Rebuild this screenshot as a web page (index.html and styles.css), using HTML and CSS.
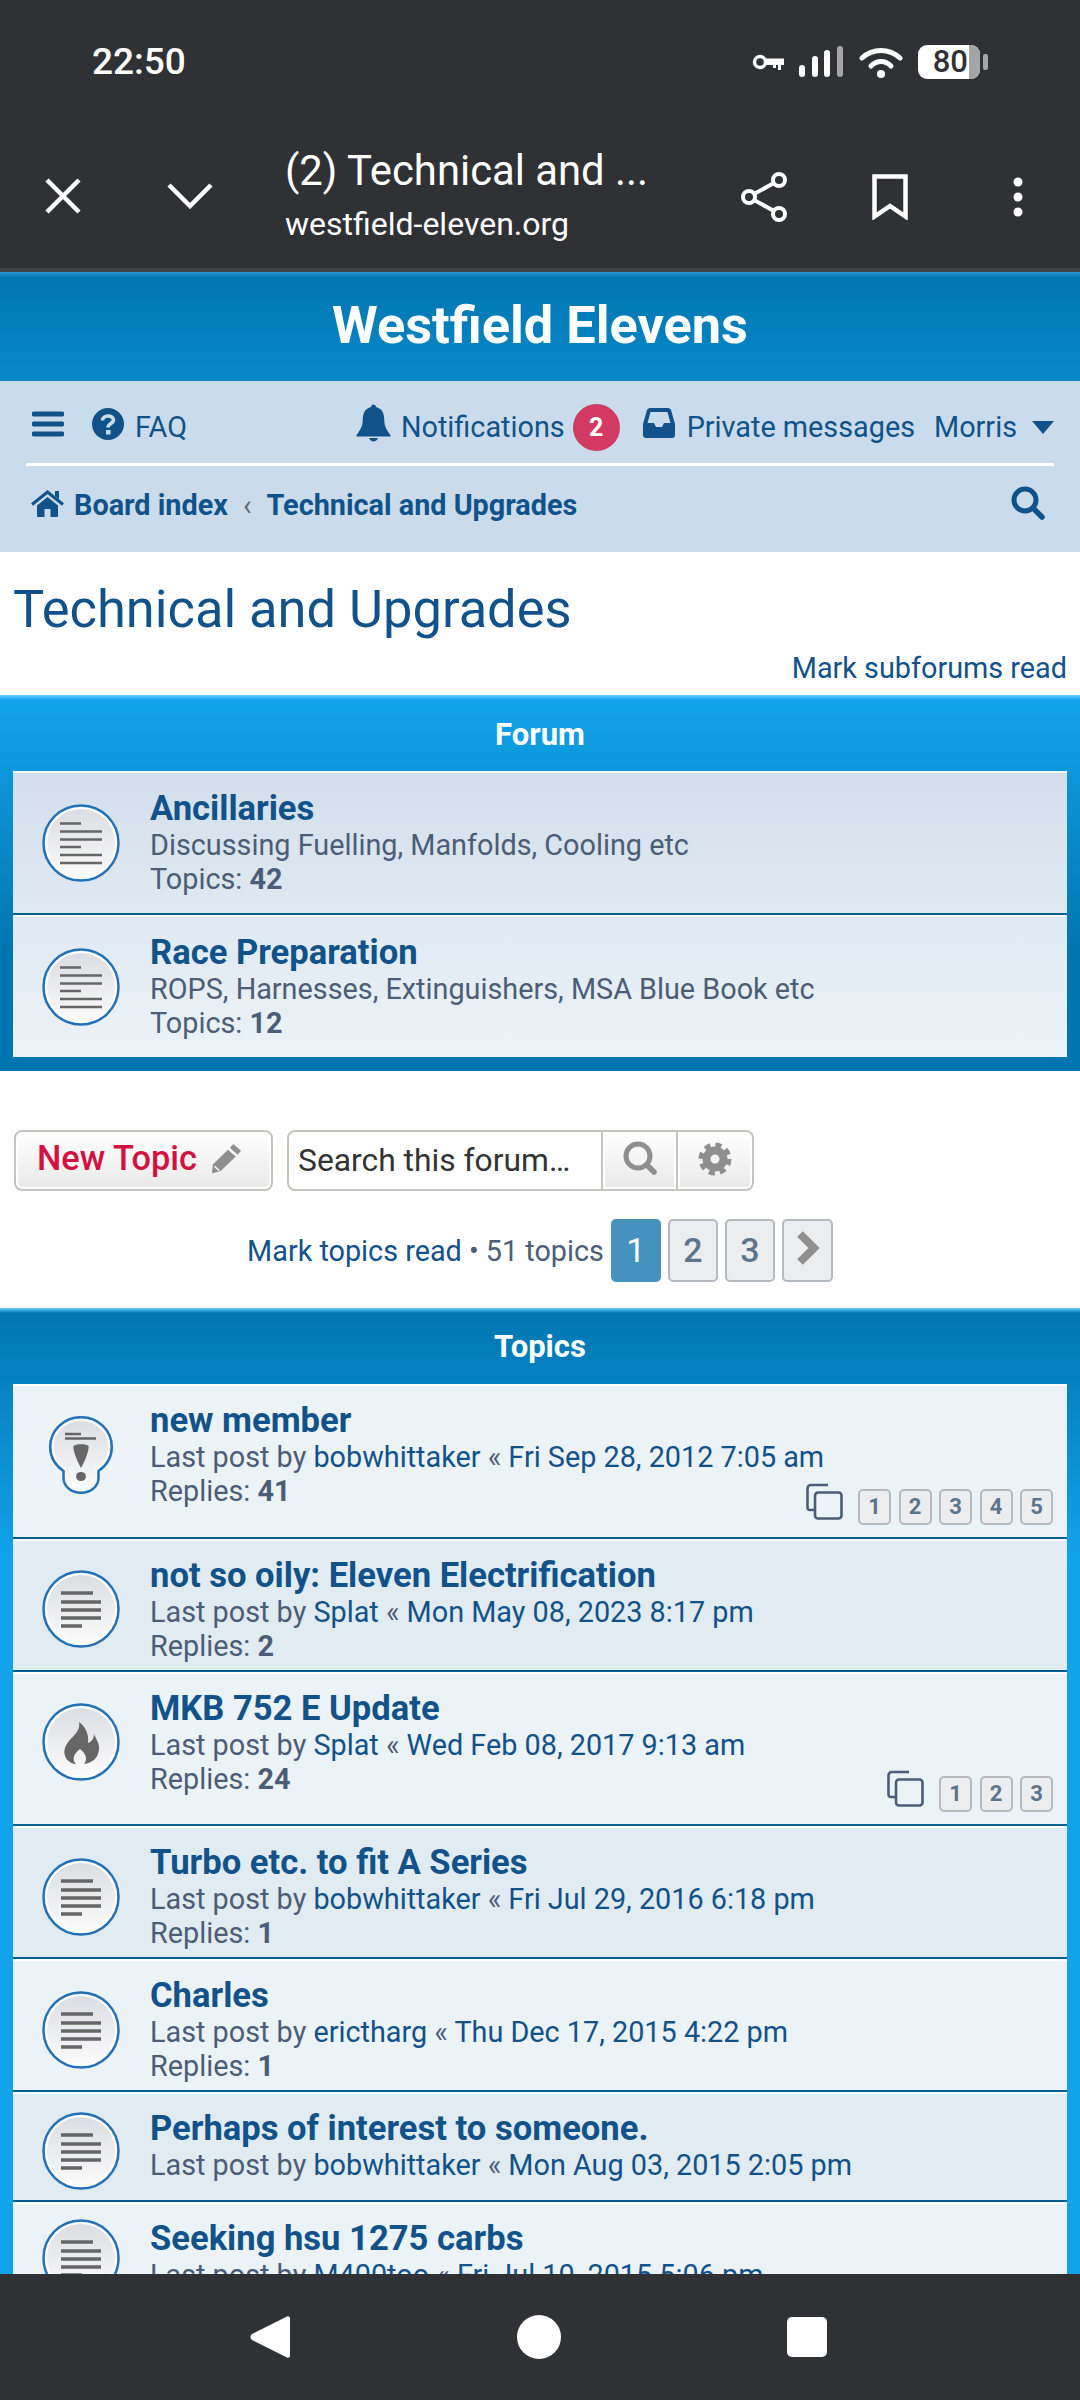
FILE: index.html
```html
<!DOCTYPE html>
<html>
<head>
<meta name="viewport" content="width=device-width, initial-scale=1">
<link rel="stylesheet" href="styles.css">
</head>
<body>
  <svg class="defs" aria-hidden="true">
    <defs>
      <linearGradient id="disc" x1="0" y1="0" x2="0" y2="1">
        <stop offset="0" stop-color="#dcdde2"/>
        <stop offset="1" stop-color="#fbfbfb"/>
      </linearGradient>
      <symbol id="icon-forum" viewBox="0 0 78 78">
        <circle cx="39" cy="39" r="37.5" fill="#fff" stroke="#2272b8" stroke-width="2.5"/>
        <circle cx="39" cy="39" r="34" fill="url(#disc)"/>
        <path d="M18 19.5h21M18 27.5h42M18 35.5h42M18 43h21M18 51h42M18 59h42" stroke="#666" stroke-width="2.4"/>
      </symbol>
      <symbol id="icon-topic" viewBox="0 0 78 78">
        <circle cx="39" cy="39" r="37.5" fill="#fff" stroke="#2272b8" stroke-width="2.5"/>
        <circle cx="39" cy="39" r="34" fill="url(#disc)"/>
        <path d="M19 23h32M19 32h40M19 40h40M19 48h40M19 56h21" stroke="#666" stroke-width="3.6"/>
      </symbol>
      <symbol id="icon-hot" viewBox="0 0 78 78">
        <circle cx="39" cy="39" r="37.5" fill="#fff" stroke="#2272b8" stroke-width="2.5"/>
        <circle cx="39" cy="39" r="34" fill="url(#disc)"/>
        <path fill="#666" d="M37 19C39 27 32 32 27 38C22 44 21 50 24 55C27 60 32 61 34 61C30 57 31 51 38 46C44 50 46 57 42 61C50 60 56 55 57 47C58 41 54 36 52 31C52 36 49 39 46 40C47 32 44 24 37 19Z"/>
      </symbol>
      <symbol id="icon-sticky" viewBox="0 0 78 78">
        <path d="M39 1.2C21.800 1.200 8.200 14.500 8.200 31C8.200 42.500 15 50.500 21.500 55V62C21.500 71 30 76.800 39 76.800C48 76.800 56.500 71 56.500 62V55C63 50.500 69.800 42.500 69.800 31C69.800 14.500 56.200 1.200 39 1.200Z" fill="#f8f8f9" stroke="#2272b8" stroke-width="2.500"/>
        <path d="M39 5C24 5 12 16.500 12 31C12 41 18 48 25 52.500V62C25 69 32 73 39 73C46 73 53 69 53 62V52.500C60 48 66 41 66 31C66 16.500 54 5 39 5Z" fill="url(#disc)"/>
        <path d="M23 18h16M23 22.500h31" stroke="#666" stroke-width="2.600" fill="none"/>
        <path fill="#666" d="M31.500 30C33 27.500 45 27.500 46.500 30C47.500 34 42 47 39 52C36 47 30.500 34 31.500 30Z"/>
        <ellipse cx="39" cy="60.500" rx="5" ry="4.500" fill="#666"/>
      </symbol>
      <symbol id="icon-pages" viewBox="0 0 37 37">
        <path d="M22 2H5C3 2 1.500 3.500 1.500 5.500V24.500C1.500 26 2.500 27 4 27H9" fill="none" stroke="#4c5d77" stroke-width="2.600"/>
        <rect x="9" y="9.500" width="26.500" height="26" rx="3" fill="none" stroke="#4c5d77" stroke-width="2.600"/>
      </symbol>
    </defs>
  </svg>

  <div class="phone-top">
    <div class="status-bar">
      <span class="clock">22:50</span>
      <div class="status-icons">
        <svg class="ic-key" viewBox="0 0 32 18"><circle cx="8" cy="9" r="5.500" fill="none" stroke="#fff" stroke-width="3.400"/><path d="M13 5.500h19v6.500h-3v5h-3v-5h-2v3h-3v-3h-8z" fill="#fff"/></svg>
        <svg class="ic-signal" viewBox="0 0 46 32"><g fill="none" stroke-width="6" stroke-linecap="round"><path d="M4 22v6M17 13v15M29 7v21" stroke="#fff"/><path d="M42 3v25" stroke="#a5a5a7"/></g></svg>
        <svg class="ic-wifi" viewBox="0 0 44 31"><g fill="none" stroke="#fff" stroke-width="5" stroke-linecap="round"><path d="M3 11C14 1 30 1 41 11"/><path d="M12 19C18 13 26 13 32 19"/></g><circle cx="22" cy="27" r="4" fill="#fff"/></svg>
        <div class="battery"><span class="battery-level">80</span><span class="battery-rest"></span></div>
        <span class="battery-cap"></span>
      </div>
    </div>
    <div class="toolbar">
      <svg class="ic-close" viewBox="0 0 36 36"><path d="M2 2l32 32M34 2L2 34" stroke="#fff" stroke-width="4.500"/></svg>
      <svg class="ic-down" viewBox="0 0 46 26"><path d="M2 2l21 21L44 2" fill="none" stroke="#fff" stroke-width="4.500"/></svg>
      <div class="tab-info">
        <div class="tab-title">(2) Technical and ...</div>
        <div class="tab-url">westfield-eleven.org</div>
      </div>
      <svg class="ic-share" viewBox="0 0 46 52"><g fill="none" stroke="#fff" stroke-width="4"><circle cx="38" cy="9" r="6"/><circle cx="8" cy="26" r="6"/><circle cx="38" cy="43" r="6"/><path d="M13 23L33 12M13 29l20 11"/></g></svg>
      <svg class="ic-bookmark" viewBox="0 0 36 46"><path d="M2.500 2.500h31v40L18 32 2.500 42.500z" fill="none" stroke="#fff" stroke-width="4.500"/></svg>
      <svg class="ic-dots" viewBox="0 0 12 40"><circle cx="6" cy="5" r="4.500" fill="#fff"/><circle cx="6" cy="20" r="4.500" fill="#fff"/><circle cx="6" cy="35" r="4.500" fill="#fff"/></svg>
    </div>
  </div>

  <div class="page">
    <div class="site-head">Westfield Elevens</div>

    <div class="navbar">
      <div class="nav-row nav-main">
        <svg class="ic-bars" viewBox="0 0 32 26"><path d="M2 3h28M2 13h28M2 23h28" stroke="#105289" stroke-width="5" stroke-linecap="round"/></svg>
        <svg class="ic-faq" viewBox="0 0 32 32"><circle cx="16" cy="16" r="16" fill="#105289"/><path d="M10.500 12.500C10.500 6.500 21.500 6.500 21.500 12C21.500 15.500 16 15.500 16 19.500" fill="none" stroke="#cadceb" stroke-width="3.600"/><rect x="14" y="22" width="4.500" height="4.500" fill="#cadceb"/></svg>
        <a class="nav-link" href="#">FAQ</a>
        <div class="nav-right">
          <svg class="ic-bell" viewBox="0 0 36 38"><path fill="#105289" d="M18 0c1.500 0 2.500 1 2.500 2.600C26.500 4 29 9 29 15c0 8 3 12 6.500 16.500V33H.5v-1.500C4 27 7 23 7 15 7 9 9.500 4 15.500 2.600 15.500 1 16.500 0 18 0zM13.500 34.500h9C22 37 20 38 18 38s-4-1-4.500-3.500z"/></svg>
          <a class="nav-link" href="#">Notifications</a>
          <span class="badge">2</span>
          <svg class="ic-inbox" viewBox="0 0 32 30"><path fill="#105289" d="M7 0h18c1.500 0 2.500 1 3 2l4 14v11c0 2-1 3-3 3H3c-2 0-3-1-3-3V16L4 2c.5-1 1.500-2 3-2zM7.500 4L4.500 15H11l2 4h6l2-4h6.500L24.500 4z"/></svg>
          <a class="nav-link" href="#">Private messages</a>
          <a class="nav-link user-link" href="#">Morris</a>
          <span class="caret"></span>
        </div>
      </div>
      <div class="nav-row nav-crumbs">
        <svg class="ic-home" viewBox="0 0 33 27"><path fill="#105289" d="M6 15.500L16.500 7 27 15.500V26c0 .6-.4 1-1 1h-6.500v-8h-6v8H7c-.6 0-1-.4-1-1z"/><path fill="none" stroke="#105289" stroke-width="3" d="M1 14.500L16.500 2 32 14.500"/><path fill="#105289" d="M24 1h4v8l-4-3z"/></svg>
        <a class="crumb" href="#">Board index</a>
        <span class="crumb-sep">&lsaquo;</span>
        <a class="crumb" href="#">Technical and Upgrades</a>
        <svg class="ic-search" viewBox="0 0 34 34"><circle cx="14" cy="14" r="11" fill="none" stroke="#105289" stroke-width="5"/><path d="M22 22l9 9" stroke="#105289" stroke-width="5.500" stroke-linecap="round"/></svg>
      </div>
    </div>

    <div class="intro">
      <h2 class="forum-heading">Technical and Upgrades</h2>
      <div class="mark-read"><a href="#">Mark subforums read</a></div>
    </div>

    <div class="block block-forums">
      <div class="block-head">Forum</div>
      <div class="row forum-row">
        <svg class="row-icon"><use href="#icon-forum"/></svg>
        <div class="row-text">
          <a class="row-title" href="#">Ancillaries</a>
          <div class="row-line">Discussing Fuelling, Manfolds, Cooling etc</div>
          <div class="row-line">Topics: <strong>42</strong></div>
        </div>
      </div>
      <div class="row forum-row">
        <svg class="row-icon"><use href="#icon-forum"/></svg>
        <div class="row-text">
          <a class="row-title" href="#">Race Preparation</a>
          <div class="row-line">ROPS, Harnesses, Extinguishers, MSA Blue Book etc</div>
          <div class="row-line">Topics: <strong>12</strong></div>
        </div>
      </div>
    </div>

    <div class="actions">
      <a class="btn-new" href="#">New Topic
        <svg class="ic-pencil" viewBox="0 0 32 32"><path fill="#8f8f8f" d="M23 1l8 7-3.500 4-8-7zM17.500 7l8 7L10 29 1 31.500 2 22z"/><path d="M3.500 24l5 4.500" stroke="#f4f4f4" stroke-width="1.500"/></svg>
      </a>
      <div class="search-box">
        <div class="search-input">Search this forum…</div>
        <div class="search-btn">
          <svg class="ic-tool" viewBox="0 0 34 36"><circle cx="15" cy="15" r="12" fill="none" stroke="#8f8f8f" stroke-width="5"/><path d="M24 24l7 7" stroke="#8f8f8f" stroke-width="5.500" stroke-linecap="round"/></svg>
        </div>
        <div class="search-btn search-btn-last">
          <svg class="ic-tool" viewBox="0 0 34 34"><circle cx="17" cy="17" r="8.500" fill="none" stroke="#8f8f8f" stroke-width="8"/><circle cx="17" cy="17" r="14" fill="none" stroke="#8f8f8f" stroke-width="5" stroke-dasharray="6 5"/></svg>
        </div>
      </div>
    </div>

    <div class="pager-row">
      <a href="#">Mark topics read</a><span class="pager-count">• 51 topics</span>
      <span class="page-num page-active">1</span>
      <span class="page-num">2</span>
      <span class="page-num">3</span>
      <span class="page-num page-next"><svg viewBox="0 0 24 36"><path d="M4 4l14 14L4 32" fill="none" stroke="#8f8f8f" stroke-width="8"/></svg></span>
    </div>

    <div class="block block-topics">
      <div class="block-head">Topics</div>

      <div class="row topic-row row-light has-pages">
        <svg class="row-icon"><use href="#icon-sticky"/></svg>
        <div class="row-text">
          <a class="row-title" href="#">new member</a>
          <div class="row-line">Last post by <a href="#">bobwhittaker</a> « <a href="#">Fri Sep 28, 2012 7:05 am</a></div>
          <div class="row-line">Replies: <strong>41</strong></div>
        </div>
        <div class="mini-pages">
          <svg class="ic-pages"><use href="#icon-pages"/></svg>
          <span class="mini">1</span><span class="mini">2</span><span class="mini">3</span><span class="mini">4</span><span class="mini">5</span>
        </div>
      </div>

      <div class="row topic-row row-dark">
        <svg class="row-icon"><use href="#icon-topic"/></svg>
        <div class="row-text">
          <a class="row-title" href="#">not so oily: Eleven Electrification</a>
          <div class="row-line">Last post by <a href="#">Splat</a> « <a href="#">Mon May 08, 2023 8:17 pm</a></div>
          <div class="row-line">Replies: <strong>2</strong></div>
        </div>
      </div>

      <div class="row topic-row row-light has-pages">
        <svg class="row-icon"><use href="#icon-hot"/></svg>
        <div class="row-text">
          <a class="row-title" href="#">MKB 752 E Update</a>
          <div class="row-line">Last post by <a href="#">Splat</a> « <a href="#">Wed Feb 08, 2017 9:13 am</a></div>
          <div class="row-line">Replies: <strong>24</strong></div>
        </div>
        <div class="mini-pages">
          <svg class="ic-pages"><use href="#icon-pages"/></svg>
          <span class="mini">1</span><span class="mini">2</span><span class="mini">3</span>
        </div>
      </div>

      <div class="row topic-row row-dark">
        <svg class="row-icon"><use href="#icon-topic"/></svg>
        <div class="row-text">
          <a class="row-title" href="#">Turbo etc. to fit A Series</a>
          <div class="row-line">Last post by <a href="#">bobwhittaker</a> « <a href="#">Fri Jul 29, 2016 6:18 pm</a></div>
          <div class="row-line">Replies: <strong>1</strong></div>
        </div>
      </div>

      <div class="row topic-row row-light">
        <svg class="row-icon"><use href="#icon-topic"/></svg>
        <div class="row-text">
          <a class="row-title" href="#">Charles</a>
          <div class="row-line">Last post by <a href="#">erictharg</a> « <a href="#">Thu Dec 17, 2015 4:22 pm</a></div>
          <div class="row-line">Replies: <strong>1</strong></div>
        </div>
      </div>

      <div class="row topic-row row-dark row-short">
        <svg class="row-icon"><use href="#icon-topic"/></svg>
        <div class="row-text">
          <a class="row-title" href="#">Perhaps of interest to someone.</a>
          <div class="row-line">Last post by <a href="#">bobwhittaker</a> « <a href="#">Mon Aug 03, 2015 2:05 pm</a></div>
        </div>
      </div>

      <div class="row topic-row row-light">
        <svg class="row-icon"><use href="#icon-topic"/></svg>
        <div class="row-text">
          <a class="row-title" href="#">Seeking hsu 1275 carbs</a>
          <div class="row-line">Last post by <a href="#">M400too</a> « <a href="#">Fri Jul 10, 2015 5:06 pm</a></div>
        </div>
      </div>
    </div>
  </div>

  <div class="phone-nav">
    <svg class="ic-back" viewBox="0 0 40 44"><path d="M37 1.500c1.500-.8 3 .2 3 2v37c0 1.800-1.500 2.800-3 2L2 25c-2-1.500-2-4.500 0-6z" fill="#fff"/></svg>
    <span class="nav-home"></span>
    <span class="nav-recent"></span>
  </div>
</body>
</html>
```

FILE: styles.css
```css
* {
  box-sizing: border-box;
}

html, body {
  margin: 0;
  height: 2400px;
}

body {
  display: flex;
  flex-direction: column;
  overflow: hidden;
  background: #fff;
  font-family: Roboto, "Noto Sans", sans-serif;
  font-size: 28.8px;
  color: #4c5d77;
}

a {
  color: #105289;
  text-decoration: none;
}

svg {
  display: block;
  flex: none;
}

.defs {
  position: absolute;
  width: 0;
  height: 0;
}

/* Android status bar and custom tab toolbar */
.phone-top {
  height: 272px;
  flex: none;
  background: #303135;
  border-bottom: 4px solid #3f4044;
  color: #fff;
}

.status-bar {
  height: 122px;
  display: flex;
  align-items: center;
  padding: 0 92px;
}

.clock {
  font-size: 37px;
  font-weight: 500;
}

.status-icons {
  margin-left: auto;
  margin-top: 2px;
  display: flex;
  align-items: center;
}

.ic-key {
  width: 32px;
  height: 18px;
  margin-right: 14px;
}

.ic-signal {
  width: 46px;
  height: 32px;
  margin-right: 15px;
}

.ic-wifi {
  width: 44px;
  height: 31px;
  margin-right: 15px;
}

.battery {
  width: 62px;
  height: 34px;
  display: flex;
  border-radius: 9px;
  overflow: hidden;
  background: #fff;
}

.battery-level {
  width: 51px;
  padding-right: 1px;
  text-align: right;
  color: #303135;
  font-size: 31px;
  font-weight: 500;
  line-height: 34px;
}

.battery-rest {
  flex: 1;
  background: #a5a5a7;
}

.battery-cap {
  width: 5px;
  height: 16px;
  margin-left: 3px;
  border-radius: 2px;
  background: #a5a5a7;
}

.toolbar {
  height: 146px;
  display: flex;
  align-items: center;
}

.ic-close {
  width: 36px;
  height: 36px;
  margin-left: 45px;
  margin-top: 2px;
}

.ic-down {
  width: 46px;
  height: 26px;
  margin-left: 86px;
  margin-top: 2px;
}

.tab-info {
  margin-left: 72px;
  width: 430px;
  margin-top: -2px;
}

.tab-title {
  font-size: 41.8px;
  line-height: 52px;
}

.tab-url {
  font-size: 32px;
  line-height: 40px;
  margin-top: 7px;
}

.ic-share {
  width: 46px;
  height: 52px;
  margin-left: 26px;
  margin-top: 4px;
}

.ic-bookmark {
  width: 36px;
  height: 46px;
  margin-left: 85px;
  margin-top: 4px;
}

.ic-dots {
  width: 12px;
  height: 40px;
  margin-left: 104px;
  margin-top: 4px;
}

/* Forum page, clipped by the phone nav */
.page {
  flex: 1;
  min-height: 0;
  overflow: hidden;
}

.site-head {
  height: 109px;
  background: linear-gradient(to bottom, #2b9ad3 0, #0076b1 5px, #12a3eb 253px);
  color: #fff;
  font-size: 52.3px;
  font-weight: 700;
  text-align: center;
  line-height: 106px;
}

.navbar {
  height: 171px;
  background: #cadceb;
  padding: 0 26px;
}

.nav-row {
  display: flex;
  align-items: center;
}

.nav-main {
  height: 85px;
  padding-top: 10px;
  border-bottom: 3px solid #fff;
}

.ic-bars {
  width: 32px;
  height: 26px;
  margin-left: 6px;
  margin-top: -6px;
}

.ic-faq {
  width: 32px;
  height: 32px;
  margin-left: 28px;
  margin-right: 11px;
  margin-top: -6px;
}

.nav-right {
  margin-left: auto;
  display: flex;
  align-items: center;
}

.ic-bell {
  width: 35px;
  height: 38px;
  margin-right: 10px;
  margin-top: -8px;
}

.badge {
  width: 47px;
  height: 47px;
  margin-left: 8px;
  margin-right: 23px;
  border-radius: 50%;
  background: #d23a63;
  color: #fff;
  font-size: 25px;
  font-weight: 700;
  line-height: 47px;
  text-align: center;
}

.ic-inbox {
  width: 32px;
  height: 30px;
  margin-right: 12px;
  margin-top: -8px;
}

.user-link {
  margin-left: 19px;
}

.caret {
  width: 0;
  height: 0;
  margin-left: 15px;
  border-left: 11px solid transparent;
  border-right: 11px solid transparent;
  border-top: 13px solid #105289;
}

.nav-crumbs {
  height: 78px;
}

.ic-home {
  width: 33px;
  height: 27px;
  margin-left: 5px;
  margin-right: 10px;
  margin-top: -4px;
}

.crumb {
  font-weight: 700;
}

.crumb-sep {
  margin: 0 15px;
  color: #5d6a80;
}

.ic-search {
  width: 34px;
  height: 34px;
  margin-left: auto;
  margin-right: 9px;
  margin-top: -4px;
}

.intro {
  height: 143px;
  padding: 0 13px;
}

.forum-heading {
  margin: 0;
  padding-top: 27px;
  font-size: 52.4px;
  font-weight: 400;
  line-height: 60px;
  color: #105289;
}

.mark-read {
  margin-top: 12px;
  text-align: right;
  line-height: 34px;
}

/* forabg / forumbg blocks */
.block {
  padding: 0 13px;
}

.block-forums {
  padding-bottom: 14px;
  background: linear-gradient(to bottom, #6aceff 0, #12a3eb 5px, #0076b1 253px);
}

.block-topics {
  margin-top: 26px;
  background: linear-gradient(to bottom, #6aceff 0, #0076b1 5px, #12a3eb 253px);
}

.block-head {
  height: 76px;
  color: #fff;
  font-size: 31px;
  font-weight: 700;
  text-align: center;
  line-height: 79px;
}

.block-topics .block-head {
  line-height: 77px;
}

.row {
  display: flex;
  align-items: center;
  padding: 16px 0 6px;
  border-top: 2px solid #fff;
  border-bottom: 2px solid #00608f;
}

.row-icon {
  width: 78px;
  height: 78px;
  margin-left: 29px;
  margin-right: 30px;
}

.row-text {
  flex: 1;
  min-width: 0;
  align-self: flex-start;
  white-space: nowrap;
}

.row-title {
  display: block;
  font-size: 34.6px;
  font-weight: 700;
  line-height: 39px;
}

.row-line {
  line-height: 34px;
}

.row-line strong {
  font-weight: 700;
}

.forum-row {
  padding-bottom: 17px;
}

.forum-row:nth-child(2) {
  background: linear-gradient(to bottom, #d2dfea, #dfe9f2);
}

.forum-row:nth-child(3) {
  background: linear-gradient(to bottom, #dfe9f2, #ecf3f7);
  border-bottom: 0;
}

.topic-row {
  padding: 15px 0 7px;
}

.row-light {
  background: #ecf3f7;
}

.row-dark {
  background: #e1ebf2;
}

.row-short {
  min-height: 110px;
}

.has-pages {
  padding-bottom: 28.5px;
}

.mini-pages {
  flex: none;
  align-self: flex-end;
  margin-right: 14px;
  margin-bottom: -16.5px;
  display: flex;
  align-items: flex-end;
  gap: 7.5px;
}

.ic-pages {
  width: 37px;
  height: 37px;
  margin-right: 7.5px;
  margin-bottom: 5px;
}

.mini {
  width: 33px;
  height: 36px;
  border: 2px solid #b4bac0;
  border-radius: 5px;
  background: #ecedee;
  color: #5c758c;
  font-size: 22px;
  font-weight: 700;
  line-height: 32px;
  text-align: center;
}

/* New Topic button and forum search */
.actions {
  display: flex;
  gap: 14px;
  padding: 0 14px;
  margin-top: 59px;
}

.btn-new {
  width: 259px;
  height: 61px;
  display: flex;
  align-items: center;
  gap: 14px;
  padding-left: 21px;
  padding-bottom: 5px;
  border: 2px solid #c7c3bf;
  border-radius: 8px;
  background: linear-gradient(to bottom, #fff, #e9e9e9);
  box-shadow: inset 0 0 0 2px #fff;
  color: #d31141;
  font-size: 34.3px;
  font-weight: 500;
}

.ic-pencil {
  width: 31px;
  height: 31px;
}

.search-box {
  height: 61px;
  display: flex;
}

.search-input {
  width: 316px;
  padding-left: 9px;
  border: 2px solid #c7c3bf;
  border-radius: 8px 0 0 8px;
  color: #333;
  font-size: 31.8px;
  line-height: 57px;
}

.search-btn {
  width: 75px;
  display: flex;
  align-items: center;
  justify-content: center;
  border: 2px solid #c7c3bf;
  border-left: 0;
  background: linear-gradient(to bottom, #fff, #e9e9e9);
  box-shadow: inset 0 0 0 2px #fff;
}

.search-btn-last {
  width: 76px;
  border-radius: 0 8px 8px 0;
}

.ic-tool {
  width: 34px;
  height: 36px;
  margin-top: -4px;
}

.pager-row {
  display: flex;
  align-items: center;
  justify-content: center;
  margin-top: 28px;
  height: 63px;
}

.pager-count {
  margin-left: 7px;
  margin-right: 7px;
}

.page-num {
  width: 50px;
  height: 63px;
  margin-left: 7px;
  border: 2px solid #b4bac0;
  border-radius: 5px;
  background: #ecedee;
  color: #5c758c;
  font-size: 34px;
  font-weight: 500;
  line-height: 59px;
  text-align: center;
}

.page-active {
  margin-left: 0;
  border-color: #4692bf;
  background: #4692bf;
  color: #fff;
  font-weight: 400;
}

.page-next {
  width: 51px;
  padding: 9px 0 0 12px;
}

.page-next svg {
  width: 24px;
  height: 36px;
}

/* Android nav buttons */
.phone-nav {
  height: 126px;
  flex: none;
  background: #303135;
  display: flex;
  align-items: center;
  padding-left: 250px;
}

.ic-back {
  width: 40px;
  height: 44px;
}

.nav-home {
  width: 44px;
  height: 44px;
  margin-left: 227px;
  border-radius: 50%;
  background: #fff;
}

.nav-recent {
  width: 40px;
  height: 40px;
  margin-left: 226px;
  border-radius: 5px;
  background: #fff;
}
```
